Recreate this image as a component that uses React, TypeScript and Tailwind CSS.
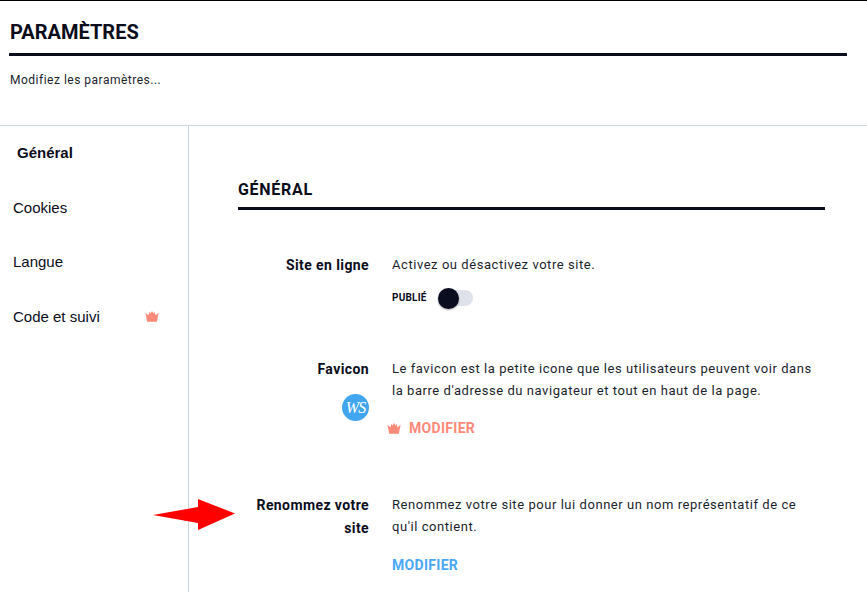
import type { ReactNode } from 'react'

const DIN = "font-['Roboto',sans-serif]"

function Crown({ className }: { className: string }) {
  return (
    <svg viewBox="0 0 14 11" className={className} fill="currentColor">
      <path d="M0.3 1.6 L3.4 4.4 L4.4 0.8 L5.5 2.4 L7 0 L8.5 2.4 L9.6 0.8 L10.6 4.4 L13.7 1.6 L11.8 10.8 L2.2 10.8 Z" />
    </svg>
  )
}

function SideItem({ children, bold, crown }: { children: ReactNode; bold?: boolean; crown?: boolean }) {
  return (
    <div
      className={`flex h-[54.5px] items-center justify-between pr-[29px] font-['Liberation_Sans',sans-serif] text-[15px] text-[#0b0d1c] ${bold ? 'pl-[17px] font-bold' : 'pl-[13px]'}`}
    >
      <span>{children}</span>
      {crown && <Crown className="h-[11px] w-[14px] text-[#ff8a7a]" />}
    </div>
  )
}

function Row({ label, side, children, className }: { label: ReactNode; side?: ReactNode; children: ReactNode; className: string }) {
  return (
    <div className={`flex ${className}`}>
      <div className="flex w-[131px] shrink-0 flex-col items-end text-right text-[14px] font-bold leading-[23px] tracking-[0.4px] text-[#0b0d1c]">
        {label}
        {side}
      </div>
      <div className="ml-[23px] min-w-0 flex-1 pr-[6px] text-[13px] leading-[22px] tracking-[0.55px] text-[#1c1f2e]">{children}</div>
    </div>
  )
}

export default function App() {
  return (
    <div className={`relative h-[592px] w-[867px] overflow-hidden border-t border-black bg-white ${DIN}`}>
      <header className="box-content h-[124px] border-b border-[#ccd6df] px-[9px]">
        <h1 className="pl-px pt-[17px] text-[20px] font-bold leading-[29px] text-[#0b0d1c]">PARAMÈTRES</h1>
        <div className="mr-[11px] mt-[6px] h-[3px] bg-[#0b0d1c]" />
        <p className="pl-px pt-[16px] text-[12px] leading-[16px] tracking-[0.5px] text-[#1c1f2e]">Modifiez les paramètres...</p>
      </header>

      <div className="flex">
        <nav className="h-[466px] w-[189px] shrink-0 border-r border-[#ccd6df]">
          <SideItem bold>Général</SideItem>
          <SideItem>Cookies</SideItem>
          <SideItem>Langue</SideItem>
          <SideItem crown>Code et suivi</SideItem>
        </nav>

        <main className="flex-1 pl-[49px] pr-[42px]">
          <h2 className="pt-[53px] text-[16px] font-bold leading-[22px] tracking-[0.7px] text-[#0b0d1c]">GÉNÉRAL</h2>
          <div className="mt-[6px] h-[3px] bg-[#0b0d1c]" />

          <Row label="Site en ligne" className="mt-[44px]">
            Activez ou désactivez votre site.
            <div className="mt-[14px] flex items-center">
              <span className="text-[10px] font-bold leading-[14px] tracking-[0.2px] text-[#0b0d1c]">PUBLIÉ</span>
              <span className="relative ml-[11px] block h-[16px] w-[35px] rounded-full bg-[#dfe2ea]">
                <span className="absolute -top-[2px] left-0 h-[21px] w-[21px] rounded-full bg-[#0a0c20] shadow-[0_1px_2px_rgba(0,0,0,0.35)]" />
              </span>
            </div>
          </Row>

          <Row
            label="Favicon"
            className="mt-[52px]"
            side={
              <span className="mt-[13px] flex h-[27px] w-[27px] items-center justify-center rounded-full bg-[#42a5f0] font-['Liberation_Serif',serif] text-[16px] font-normal italic leading-none tracking-[-1px] text-white">
                WS
              </span>
            }
          >
            <p>Le favicon est la petite icone que les utilisateurs peuvent voir dans la barre d'adresse du navigateur et tout en haut de la page.</p>
            <div className="-ml-[5px] mt-[16px] flex items-center text-[14px] font-bold leading-[20px] tracking-[0.3px] text-[#ff8a7a]">
              <Crown className="h-[11px] w-[14px]" />
              <span className="ml-[8px]">MODIFIER</span>
            </div>
          </Row>

          <Row label="Renommez votre site" className="mt-[56px]">
            <p>Renommez votre site pour lui donner un nom représentatif de ce qu'il contient.</p>
            <div className="mt-[17px] text-[14px] font-bold leading-[20px] tracking-[0.3px] text-[#4aa8f5]">MODIFIER</div>
          </Row>
        </main>
      </div>

      <svg viewBox="0 0 82 32" className="absolute left-[153px] top-[498px] h-[32px] w-[82px]" fill="#ff0000">
        <path d="M0 16 L45 8 L45 0 L82 14.5 L45 31 L45 24 Z" />
      </svg>
    </div>
  )
}
